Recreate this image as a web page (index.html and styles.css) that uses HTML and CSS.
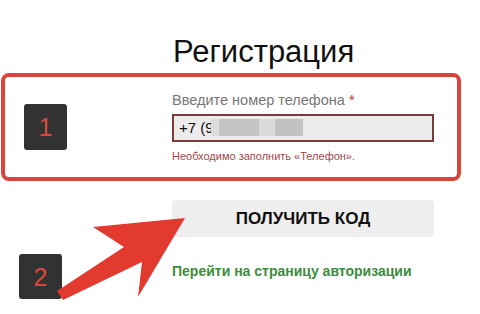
FILE: index.html
```html
<!DOCTYPE html>
<html>
	<head>
		<title>Регистрация</title>
		<meta charset="utf-8">
		<link rel="stylesheet" href="styles.css">
	</head>
	<body>
		<div class="page">
			<h1 class="title">Регистрация</h1>
			<div class="step-box">
				<div class="badge">1</div>
				<div class="field">
					<div class="field-label">Введите номер телефона <span class="req">*</span></div>
					<div class="field-input"><span>+7 (9</span><span class="blur"></span></div>
					<div class="field-error">Необходимо заполнить «Телефон».</div>
				</div>
			</div>
			<div class="actions-row">
				<div class="actions-side">
					<div class="badge">2</div>
				</div>
				<div class="actions">
					<div class="btn">ПОЛУЧИТЬ КОД</div>
					<a class="login-link" href="#">Перейти на страницу авторизации</a>
				</div>
			</div>
			<svg class="arrow" width="480" height="314" viewBox="0 0 480 314">
				<polygon points="185,218 93,227 124,247 57,291 63,300 142,262 138,297" fill="#e23a2f"/>
			</svg>
		</div>
	</body>
</html>
```

FILE: styles.css
```css
html, body {padding: 0px; margin: 0px; background: #fff;}
body {font-family: "Liberation Sans", Arial, sans-serif;}
.page {position: relative; width: 480px; height: 314px; overflow: hidden;}
.title {margin: 0; padding: 37px 0 0 173px; height: 36px; font-size: 31px; font-weight: normal; line-height: 30px; color: #111;}
.step-box {display: flex; align-items: center; width: 452px; height: 100px; margin-left: 1px; border: 4px solid #d8453b; border-radius: 8px;}
.badge {width: 43px; height: 46px; border-radius: 3px; background: #323232; color: #d9493d; font-size: 25px; line-height: 46px; text-align: center;}
.step-box .badge {margin-left: 19px;}
.field {margin-left: 105px; width: 262px;}
.field-label {font-size: 14.5px; color: #777; line-height: 16px;}
.req {color: #c9302c;}
.field-input {display: flex; align-items: center; height: 24px; margin-top: 6px; padding-left: 5px; border: 2px solid #7d3a3a; background: #ececec; font-size: 15px; color: #111;}
.blur {display: inline-block; width: 92px; height: 17px; margin-left: -3px; background: linear-gradient(90deg, #dcdcdc 0 9%, #c4c4c4 9% 52%, #dadada 52% 70%, #c2c2c2 70%);}
.field-error {margin-top: 7px; font-size: 11px; color: #a04848; line-height: 14px;}
.actions-row {display: flex;}
.actions-side {width: 172px;}
.actions-side .badge {margin: 73px 0 0 19px; height: 45px;}
.actions {padding-top: 19px; width: 262px;}
.btn {height: 37px; border-radius: 4px; background: #eeeeee; font-size: 17px; font-weight: bold; line-height: 37px; text-align: center; color: #111;}
.login-link {display: block; margin-top: 26px; font-size: 14px; font-weight: bold; color: #3b8c3b; text-decoration: none;}
.arrow {position: absolute; left: 0; top: 0;}
```
